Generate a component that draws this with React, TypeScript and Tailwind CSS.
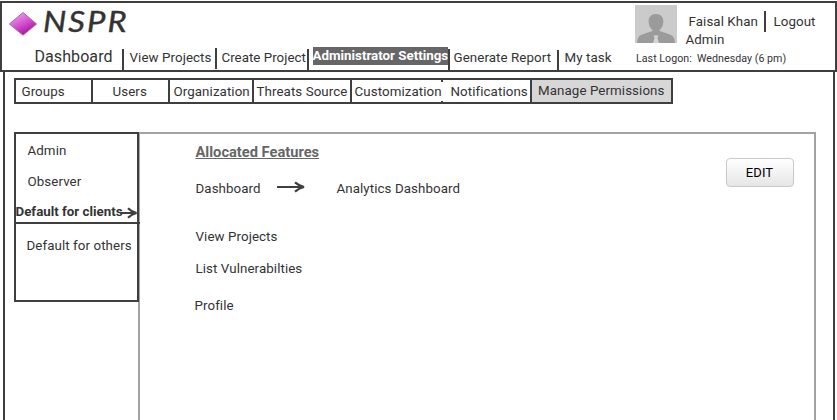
import React from "react";

const Logo = () => (
  <svg width="30" height="26" viewBox="0 0 30 26" className="shrink-0">
    <defs>
      <linearGradient id="gem" x1="0.2" y1="0.1" x2="0.7" y2="0.9">
        <stop offset="0" stopColor="#ee9aea" />
        <stop offset="0.5" stopColor="#d453cf" />
        <stop offset="1" stopColor="#ab12a6" />
      </linearGradient>
    </defs>
    <path d="M15 1.5 28.6 13 15 24.2 1.4 13Z" fill="url(#gem)" stroke="#a568a3" strokeWidth="1" />
  </svg>
);

const Avatar = () => (
  <svg width="42" height="38" viewBox="0 0 42 38" className="shrink-0">
    <rect width="42" height="38" fill="#cbcbcb" />
    <path
      d="M21 9c5 0 7.600 3.200 7.300 8-.2 3.800-1.500 6.300-3.800 8.100v1c3.500 1.400 9 2.500 12.500 4.500 1.800 1 2.700 4.300 3 7.400H2c.3-3.100 1.200-6.400 3-7.400 3.500-2 9-3.100 12.500-4.500v-1c-2.300-1.800-3.600-4.300-3.800-8.100C13.400 12.200 16 9 21 9Z"
      fill="#9b9b9b"
    />
    <path d="M18.500 30.500h5l-1 2.500 1.500 5h-6l1.500-5Z" fill="#d2d2d2" />
  </svg>
);

const FlowArrow = () => (
  <svg width="30" height="12" viewBox="0 0 30 12" className="mt-px shrink-0" fill="none" stroke="#3f3f3f">
    <path d="M1 6h25" strokeWidth="2" />
    <path d="M19 1.300c2.600 2.200 5.400 3.900 9 4.700-3.600.8-6.400 2.500-9 4.700" strokeWidth="2.300" />
  </svg>
);

const SmallArrow = () => (
  <svg width="17" height="12" viewBox="0 0 17 12" className="shrink-0" fill="none" stroke="#3f3f3f">
    <path d="M0 6h15" strokeWidth="2" />
    <path d="M7 1.300c2.200 2.300 5 3.900 8.500 4.700-3.500.8-6.300 2.400-8.500 4.700" strokeWidth="2.300" />
  </svg>
);

function Header() {
  return (
    <header className="flex h-[71px] border-2 border-[#3f3f3f]">
      <div className="w-[633px] shrink-0">
        <div className="flex h-[43px]">
          <div className="mt-2 ml-1.5">
            <Logo />
          </div>
          <span className="ml-[5px] h-[34px] origin-left scale-x-[1.15] pt-px font-['Lato',sans-serif] text-[28.500px] leading-[35px] tracking-[1.800px] italic [-webkit-text-stroke:0.4px_#333]">
            NSPR
          </span>
        </div>
        <nav className="flex h-[24px] items-start">
          <div className="mt-[3px] h-[21px] w-[122px] border-r-2 border-[#3f3f3f] pl-[32.500px]">
            <div className="-mt-[2px] text-[16px] leading-[19px]">Dashboard</div>
          </div>
          <div className="mt-[2px] h-[21px] w-[93px] border-r-2 border-[#3f3f3f] pl-[5.500px]">
            <div className="mt-px">View Projects</div>
          </div>
          <div className="mt-[3px] h-[21px] w-[92px] border-r-2 border-[#3f3f3f] pl-[4.500px] tracking-[0.020px]">
            Create Project
          </div>
          <div className="ml-1 flex w-[137px]">
            <div className="mt-px h-[18px] w-[135px] bg-[#666] font-bold tracking-normal text-white">
              <div className="-ml-[0.500px]">Administrator Settings</div>
            </div>
            <div className="mt-[3px] h-[21px] w-[2px] bg-[#3f3f3f]" />
          </div>
          <div className="mt-1 h-[20px] w-[109px] border-r-2 border-[#3f3f3f] pl-[3.500px]">
            <div className="-mt-px">Generate Report</div>
          </div>
          <div className="mt-[3px] pl-[5.500px]">My task</div>
        </nav>
      </div>
      <div>
        <div className="mt-[2px] flex h-[38px]">
          <Avatar />
          <div className="w-[87px] pt-2 pl-[8.500px]">
            <div className="pl-[3px]">Faisal Khan</div>
            <div className="mt-px">Admin</div>
          </div>
          <div className="mt-[6px] h-[21px] w-[2px] bg-[#3f3f3f]" />
          <div className="mt-2 ml-[7.500px]">Logout</div>
        </div>
        <div className="mt-[9px] flex text-[10.667px] leading-[13px] tracking-[0.030px]">
          <span className="w-[61px] pl-px">Last Logon:</span>
          <span className="pl-px">Wednesday (6 pm)</span>
        </div>
      </div>
    </header>
  );
}

function SubNav() {
  return (
    <nav className="mt-[6px] ml-[9px] flex h-[26px] w-[659px] border-2 border-[#3f3f3f]">
      <div className="w-[77px] border-r-2 border-[#3f3f3f] pt-[3px] pl-[5.500px]">Groups</div>
      <div className="w-[77px] border-r-2 border-[#3f3f3f] pt-[3px] pl-[19.500px]">Users</div>
      <div className="w-[84px] border-r-2 border-[#3f3f3f] pt-[3px] pl-[3.500px]">Organization</div>
      <div className="w-[98px] border-r-2 border-[#3f3f3f] pt-[3px] pl-[2.500px]">Threats Source</div>
      <div className="w-[89px] pt-[3px] pl-[2.500px]">Customization</div>
      <div className="flex w-[2px] flex-col justify-between">
        <i className="h-[2px] bg-[#3f3f3f]" />
        <i className="h-px bg-[#3f3f3f]" />
      </div>
      <div className="w-[89px] border-r-2 border-[#3f3f3f] pt-[3px] pl-[7.500px]">Notifications</div>
      <div className="flex-1 bg-[#d7d7d7] pt-[2px] pl-[6px]">Manage Permissions</div>
    </nav>
  );
}

function Sidebar() {
  return (
    <aside className="z-10 h-[170px] w-[125px] shrink-0 border-2 border-[#3f3f3f]">
      <div className="mt-[8px] ml-[11.500px]">Admin</div>
      <div className="mt-[14px] ml-[11.500px]">Observer</div>
      <div className="mt-[13px] flex h-[19px] w-[124px] font-bold tracking-normal">
        <span className="-ml-[0.500px] w-[105.500px] shrink-0">Default for clients</span>
        <span className="pt-[4px]">
          <SmallArrow />
        </span>
      </div>
      <div className="h-[2px] w-[124px] bg-[#3f3f3f]" />
      <div className="mt-[13px] ml-[10.500px]">Default for others</div>
    </aside>
  );
}

function Features() {
  return (
    <main className="-ml-px flex h-[288px] w-[678px] justify-between border-2 border-b-0 border-[#a3a3a3]">
      <div className="pt-[9px] pl-[55.500px]">
        <h1 className="text-[14.667px] leading-[18px] font-bold tracking-normal text-[#666] underline">
          Allocated Features
        </h1>
        <div className="mt-[19px] flex">
          <span className="w-[80px]">Dashboard</span>
          <FlowArrow />
          <span className="ml-[31px]">Analytics Dashboard</span>
        </div>
        <div className="mt-[31px]">View Projects</div>
        <div className="mt-[15px]">List Vulnerabilties</div>
        <div className="mt-[20px] -ml-px">Profile</div>
      </div>
      <button className="mt-[24px] mr-[20px] h-[29px] w-[68px] rounded-[4px] border border-[#c9c9c9] bg-gradient-to-b from-white to-[#e6e6e6] pr-[7px] pl-[6px] text-[13px] text-black">
        EDIT
      </button>
    </main>
  );
}

export default function App() {
  return (
    <div className="h-[420px] w-[837px] overflow-hidden bg-white pt-px font-['Roboto',sans-serif] text-[13.333px] leading-[17px] tracking-[0.080px] whitespace-nowrap text-[#333]">
      <Header />
      <div className="ml-[3px] h-[348px] w-[832px] overflow-hidden border-x-2 border-[#3f3f3f]">
        <SubNav />
        <div className="mt-[28px] ml-[9px] flex">
          <Sidebar />
          <Features />
        </div>
      </div>
    </div>
  );
}
